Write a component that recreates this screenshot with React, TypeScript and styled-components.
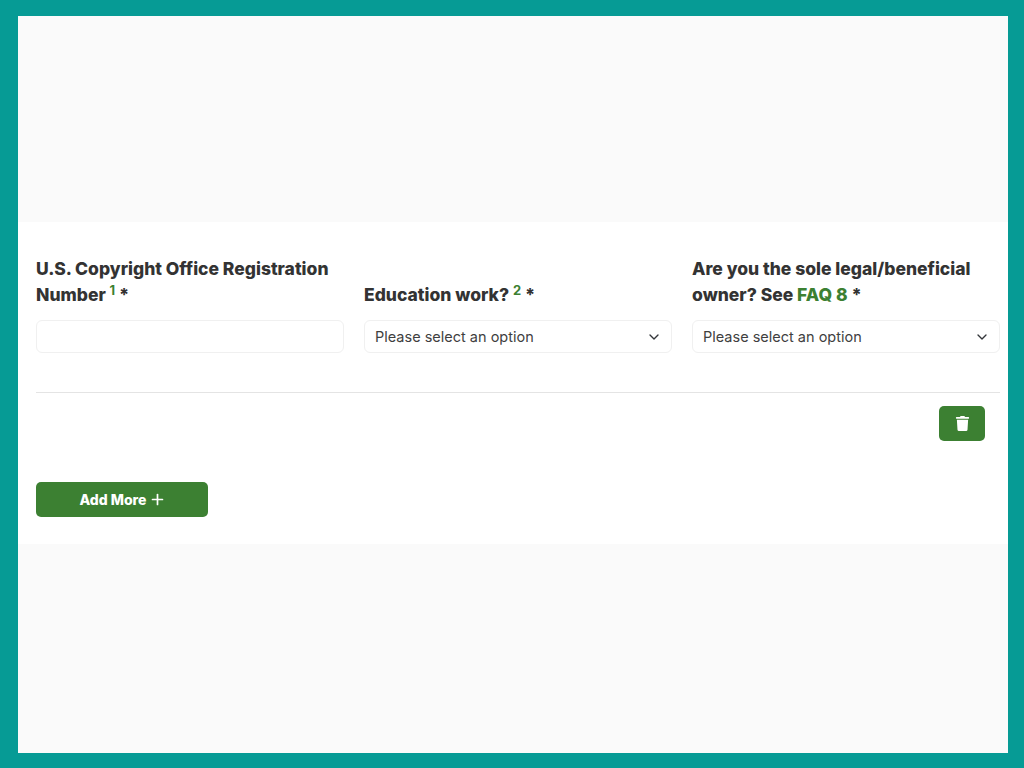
import React from "react";
import styled, { createGlobalStyle } from "styled-components";
import { FaTrash } from "react-icons/fa";
import { FiChevronDown, FiPlus } from "react-icons/fi";

const GlobalStyle = createGlobalStyle`
  html, body {
    margin: 0;
    padding: 0;
    background: #069b95;
  }
  * {
    box-sizing: border-box;
  }
`;

const FIELDS = [
  { id: "number", kind: "input" },
  { id: "education", kind: "select" },
  { id: "owner", kind: "select" },
];

const App: React.FC = () => {
  return (
    <>
      <GlobalStyle />
      <Frame>
        <GreySection $height={206} />
        <FormSection>
          <FieldGrid>
            {FIELDS.map((field) => (
              <Field key={field.id}>
                {field.id === "number" && (
                  <Label>
                    U.S. Copyright Office Registration Number <Note>1</Note> *
                  </Label>
                )}
                {field.id === "education" && (
                  <Label>
                    Education work? <Note>2</Note> *
                  </Label>
                )}
                {field.id === "owner" && (
                  <Label>
                    Are you the sole legal/beneficial owner? See{" "}
                    <FaqLink href="#">FAQ 8</FaqLink> *
                  </Label>
                )}
                {field.kind === "input" ? (
                  <TextInput type="text" />
                ) : (
                  <SelectBox>
                    Please select an option
                    <FiChevronDown size={16} color="#33363a" />
                  </SelectBox>
                )}
              </Field>
            ))}
          </FieldGrid>
          <Divider />
          <RowActions>
            <DeleteButton aria-label="Delete">
              <FaTrash size={15} color="#fff" />
            </DeleteButton>
          </RowActions>
          <AddButton>
            Add More
            <FiPlus size={17} color="#fff" strokeWidth={2.4} />
          </AddButton>
        </FormSection>
        <GreySection $height={209} />
      </Frame>
    </>
  );
};

export default App;

// Styled Components

const Frame = styled.div`
  display: flex;
  flex-direction: column;
  width: 1024px;
  height: 768px;
  padding: 16px 16px 15px 18px;
  background: #069b95;
  font-family: Inter, "Liberation Sans", sans-serif;
  overflow: hidden;
`;

const GreySection = styled.div<{ $height: number }>`
  height: ${(props) => props.$height}px;
  background: #fafafa;
`;

const FormSection = styled.div`
  height: 322px;
  padding: 34px 8px 0 18px;
  background: #fff;
`;

const FieldGrid = styled.div`
  display: grid;
  grid-template-columns: repeat(3, 308px);
  gap: 20px;
  align-items: end;
`;

const Field = styled.div`
  display: flex;
  flex-direction: column;
  gap: 12px;
`;

const Label = styled.label`
  font-size: 17.5px;
  font-weight: 800;
  line-height: 26px;
  color: #333;
`;

const Note = styled.sup`
  font-size: 13px;
  font-weight: 700;
  line-height: 0;
  color: #3c8032;
  vertical-align: 6px;
`;

const FaqLink = styled.a`
  color: #3c8032;
  text-decoration: none;
`;

const TextInput = styled.input`
  display: block;
  width: 100%;
  height: 33px;
  border: 1px solid #f0f0f0;
  border-radius: 6px;
  background: #fff;
  outline: none;
`;

const SelectBox = styled.div`
  display: flex;
  align-items: center;
  justify-content: space-between;
  height: 33px;
  padding: 0 9px 0 10px;
  border: 1px solid #f0f0f0;
  border-radius: 6px;
  background: #fff;
  font-size: 14.5px;
  color: #3f3f3f;
`;

const Divider = styled.hr`
  height: 1px;
  margin: 39px 0 0;
  border: none;
  background: #e4e4e4;
`;

const RowActions = styled.div`
  display: flex;
  justify-content: flex-end;
  padding: 13px 15px 0 0;
`;

const DeleteButton = styled.button`
  display: flex;
  align-items: center;
  justify-content: center;
  width: 46px;
  height: 35px;
  padding: 0;
  border: none;
  border-radius: 5px;
  background: #3c8032;
`;

const AddButton = styled.button`
  display: flex;
  align-items: center;
  justify-content: center;
  gap: 2px;
  width: 172px;
  height: 35px;
  margin-top: 41px;
  padding: 0 0 0 1px;
  border: none;
  border-radius: 5px;
  background: #3c8032;
  font-family: inherit;
  font-size: 14px;
  font-weight: 800;
  color: #fff;
`;
